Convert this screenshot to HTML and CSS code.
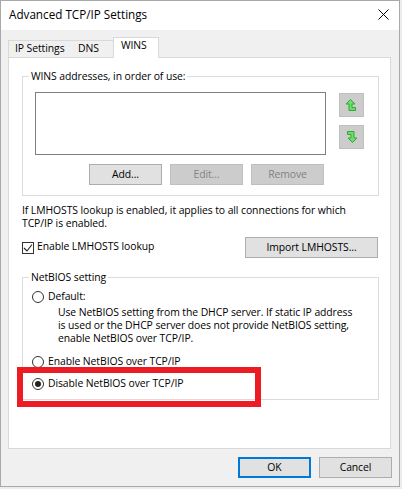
FILE: index.html
```html
<!DOCTYPE html>
<html>
<head>
<meta charset="utf-8">
<title>Advanced TCP/IP Settings</title>
<link rel="stylesheet" href="styles.css">
</head>
<body>
<div class="window">
  <div class="titlebar">
    <span class="title">Advanced TCP/IP Settings</span>
    <span class="close">
      <svg width="11" height="11" viewBox="0 0 11 11"><path d="M0.5 0.5 L10.5 10.5 M10.5 0.5 L0.5 10.5" stroke="#000" stroke-width="1" fill="none"/></svg>
    </span>
  </div>
  <div class="body">
    <div class="tabs">
      <div class="tab tab-ip">IP Settings</div>
      <div class="tab tab-dns">DNS</div>
      <div class="tab tab-wins active">WINS</div>
    </div>
    <div class="panel">
      <fieldset class="group">
        <legend>WINS addresses, in order of use:</legend>
        <div class="wins-inner">
          <div class="list-row">
            <div class="listbox"></div>
            <div class="arrows">
              <div class="arrow">
                <svg width="25" height="24" viewBox="0 0 25 24"><polygon points="11.5,6.5 16,11 13,11 13,14.5 16.5,14.5 16.5,17.5 10,17.5 10,11 7,11" fill="#6ade6a" stroke="#34a834" stroke-width="1"/></svg>
              </div>
              <div class="arrow">
                <svg width="25" height="24" viewBox="0 0 25 24"><polygon transform="rotate(180 12.5 12)" points="11.5,6.5 16,11 13,11 13,14.5 16.5,14.5 16.5,17.5 10,17.5 10,11 7,11" fill="#6ade6a" stroke="#34a834" stroke-width="1"/></svg>
              </div>
            </div>
          </div>
          <div class="btn-row">
            <div class="btn">Add...</div>
            <div class="btn disabled">Edit...</div>
            <div class="btn disabled">Remove</div>
          </div>
        </div>
      </fieldset>
      <p class="note">If LMHOSTS lookup is enabled, it applies to all connections for which<br>TCP/IP is enabled.</p>
      <div class="lm-row">
        <div class="check">
          <span class="checkbox">
            <svg width="10" height="10" viewBox="0 0 10 10"><path d="M1 5 L4 8 L9 1.5" stroke="#222" stroke-width="1.1" fill="none"/></svg>
          </span>
          <span>Enable LMHOSTS lookup</span>
        </div>
        <div class="btn import">Import LMHOSTS...</div>
      </div>
      <fieldset class="group netbios">
        <legend>NetBIOS setting</legend>
        <div class="nb-inner">
          <div class="radio-row"><span class="radio"></span><span>Default:</span></div>
          <p class="desc">Use NetBIOS setting from the DHCP server. If static IP address<br>is used or the DHCP server does not provide NetBIOS setting,<br>enable NetBIOS over TCP/IP.</p>
          <div class="radio-row enable"><span class="radio"></span><span>Enable NetBIOS over TCP/IP</span></div>
          <div class="radio-row disable"><span class="radio on"></span><span>Disable NetBIOS over TCP/IP</span></div>
        </div>
      </fieldset>
    </div>
    <div class="footer">
      <div class="btn ok">OK</div>
      <div class="btn">Cancel</div>
    </div>
  </div>
  <div class="highlight"></div>
</div>
</body>
</html>
```
FILE: styles.css
```css
html, body {
  margin: 0;
  padding: 0;
}
body {
  background: #ececec;
  font-family: "Open Sans", "Noto Sans", sans-serif;
  font-size: 10.4px;
  letter-spacing: -0.08px;
  color: #000;
}
.window {
  position: relative;
  width: 400px;
  height: 487px;
  box-sizing: border-box;
  border: 1px solid #a9a9a9;
  background: #f0f0f0;
}
.titlebar {
  height: 29px;
  background: #fff;
  display: flex;
  align-items: flex-start;
  padding: 6px 0 0 8px;
  box-sizing: border-box;
  line-height: 15px;
}
.title {
  flex: 1;
  font-size: 11.7px;
  letter-spacing: 0;
}
.close {
  display: block;
  width: 11px;
  height: 11px;
  margin: 2px 10px 0 0;
}
.close svg { display: block; }

.body {
  padding: 7px 8px 0 7px;
}
.tabs {
  display: flex;
  align-items: flex-start;
  height: 21px;
  margin-bottom: -1px;
  position: relative;
  z-index: 1;
}
.tab {
  box-sizing: border-box;
  height: 17px;
  margin-top: 3px;
  border: 1px solid #d9d9d9;
  border-bottom: none;
  background: #f0f0f0;
  line-height: 15px;
  padding-left: 6px;
  white-space: nowrap;
}
.tab-ip { width: 65px; }
.tab-dns { width: 42px; margin-left: -1px; border-left: none; }
.tab-wins { width: 46px; margin-left: -1px; padding-left: 7px; }
.tab.active {
  height: 21px;
  margin-top: 0;
  background: #fff;
}

.panel {
  width: 383px;
  height: 392px;
  box-sizing: border-box;
  border: 1px solid #d9d9d9;
  background: #fff;
  padding: 11px 0 0 13px;
}
.group {
  width: 357px;
  box-sizing: border-box;
  margin: 0;
  padding: 0;
  border: 1px solid #dcdcdc;
  min-width: 0;
}
.group legend {
  margin-left: 6px;
  padding: 0 2px;
  line-height: 15px;
}
.wins-inner {
  padding: 8px 12px 10px 12px;
}
.list-row {
  display: flex;
  align-items: flex-start;
}
.listbox {
  width: 291px;
  height: 63px;
  box-sizing: border-box;
  border: 1px solid #7f7f7f;
  background: #fff;
}
.arrows {
  margin: 1px 0 0 13px;
  display: flex;
  flex-direction: column;
  gap: 8px;
}
.arrow {
  width: 25px;
  height: 24px;
  box-sizing: border-box;
  border: 1px solid #bfbfbf;
  background: #cccccc;
}
.arrow svg {
  display: block;
  margin: -1px;
}
.btn-row {
  display: flex;
  gap: 8px;
  margin-top: 9px;
  padding-left: 54px;
}
.btn {
  width: 73px;
  height: 21px;
  box-sizing: border-box;
  border: 1px solid #adadad;
  background: #e1e1e1;
  text-align: center;
  line-height: 19px;
  white-space: nowrap;
}
.btn.disabled {
  background: #cccccc;
  border-color: #bfbfbf;
  color: #838383;
}
.note {
  margin: 8px 0 0 0;
  line-height: 13px;
}
.lm-row {
  width: 356px;
  margin-top: 7px;
  display: flex;
  align-items: flex-start;
  justify-content: space-between;
}
.check {
  display: flex;
  align-items: center;
  line-height: 15px;
  margin-top: 2px;
}
.checkbox {
  width: 12px;
  height: 12px;
  box-sizing: border-box;
  border: 1px solid #333;
  background: #fff;
  margin: 3px 3px 0 0;
  display: flex;
  align-items: center;
  justify-content: center;
}
.checkbox svg { display: block; }
.btn.import {
  width: 133px;
}
.netbios {
  margin-top: 12px;
}
.nb-inner {
  padding: 4px 0 8px 9px;
}
.radio-row {
  display: flex;
  align-items: center;
  height: 15px;
  line-height: 15px;
}
.radio {
  width: 12px;
  height: 12px;
  box-sizing: border-box;
  border: 1px solid #333;
  border-radius: 50%;
  background: #fff;
  margin-right: 4px;
  display: flex;
  align-items: center;
  justify-content: center;
}
.radio.on::after {
  content: "";
  width: 6px;
  height: 6px;
  border-radius: 50%;
  background: #222;
}
.desc {
  margin: 2px 0 0 26px;
  line-height: 13px;
}
.radio-row.enable {
  margin-top: 9px;
}
.radio-row.disable {
  margin-top: 7px;
}
.footer {
  display: flex;
  justify-content: flex-end;
  gap: 8px;
  margin: 8px -1px 0 0;
}
.btn.ok {
  border: 2px solid #0078d7;
  line-height: 17px;
}
.highlight {
  position: absolute;
  left: 16px;
  top: 366px;
  width: 244px;
  height: 40px;
  box-sizing: border-box;
  border: 6px solid #ed1c24;
}
```
